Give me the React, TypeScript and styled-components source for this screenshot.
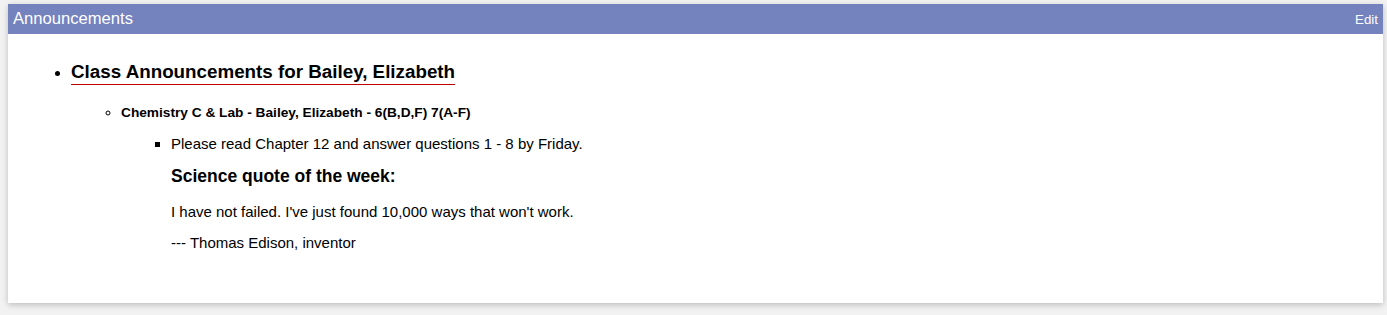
import React from 'react';
import styled, { createGlobalStyle } from 'styled-components';

const GlobalStyle = createGlobalStyle`
	html, body {
		margin: 0;
		padding: 0;
		background: #f2f2f2;
		font-family: 'Liberation Sans', Arial, sans-serif;
		color: #000;
	}
`;

const Page = styled.div`
	padding: 4px 4px 12px 8px;
`;

const Card = styled.section`
	background: #fff;
	box-shadow: 0 2px 6px rgba(0, 0, 0, 0.22);
	height: 299px;
	display: flex;
	flex-direction: column;
`;

const Header = styled.header`
	background: #7482bd;
	height: 30px;
	display: flex;
	align-items: center;
	justify-content: space-between;
	padding: 0 5px 0 5px;
	color: #fff;
`;

const HeaderTitle = styled.h2`
	margin: 0;
	font-size: 16.6px;
	font-weight: normal;
`;

const EditLink = styled.a`
	font-size: 13.3px;
	color: #fff;
	cursor: pointer;
	text-decoration: none;
`;

const Body = styled.div`
	padding: 27px 0 0 23px;
`;

const List = styled.ul<{ $marker: string; $indent: number }>`
	list-style-type: ${(p) => p.$marker};
	margin: 0;
	padding-left: ${(p) => p.$indent}px;
`;

const ClassTitle = styled.a`
	display: inline-block;
	font-size: 18.8px;
	font-weight: bold;
	line-height: 22px;
	color: #000;
	text-decoration: none;
	border-bottom: 1px solid #c00000;
	padding-bottom: 1px;
`;

const SectionItem = styled.li`
	margin-top: 19px;
	font-size: 13.7px;
	font-weight: bold;
	line-height: 17px;
`;

const NoteItem = styled.li`
	margin-top: 14px;
	font-size: 15px;
	font-weight: normal;
	line-height: 18px;
`;

const QuoteHeading = styled.h3`
	font-size: 17.5px;
	font-weight: bold;
	margin: 13px 0 0;
	line-height: 21px;
`;

const Para = styled.p`
	margin: 16px 0 0;
	font-size: 15px;
	line-height: 18px;
	& + & {
		margin-top: 13px;
	}
`;

export default function App() {
	return (
		<Page>
			<GlobalStyle />
			<Card>
				<Header>
					<HeaderTitle>Announcements</HeaderTitle>
					<EditLink>Edit</EditLink>
				</Header>
				<Body>
					<List $marker="disc" $indent={40}>
						<li>
							<ClassTitle>Class Announcements for Bailey, Elizabeth</ClassTitle>
							<List $marker="circle" $indent={50}>
								<SectionItem>
									Chemistry C &amp; Lab - Bailey, Elizabeth - 6(B,D,F) 7(A-F)
									<List $marker="square" $indent={50}>
										<NoteItem>
											Please read Chapter 12 and answer questions 1 - 8 by Friday.
											<QuoteHeading>Science quote of the week:</QuoteHeading>
											<Para>I have not failed. I've just found 10,000 ways that won't work.</Para>
											<Para>--- Thomas Edison, inventor</Para>
										</NoteItem>
									</List>
								</SectionItem>
							</List>
						</li>
					</List>
				</Body>
			</Card>
		</Page>
	);
}
